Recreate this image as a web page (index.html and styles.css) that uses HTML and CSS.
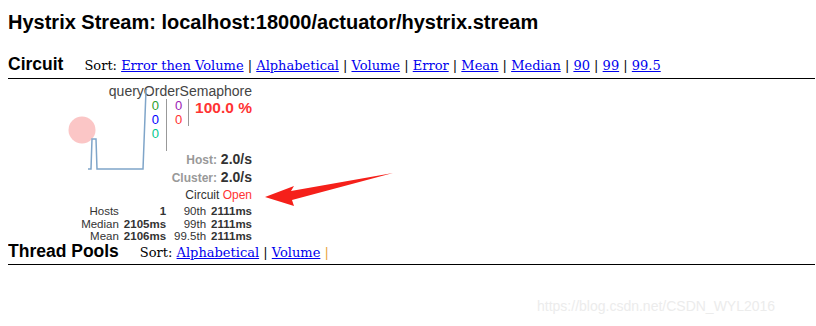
FILE: index.html
```html
<!DOCTYPE html>
<html>

<head>
    <title>Hystrix Dashboard</title>
    <meta name="viewport" content="width=device-width, initial-scale=1.0">
    <link rel="stylesheet" href="styles.css">
</head>

<body>
    <h1 class="title">Hystrix Stream: localhost:18000/actuator/hystrix.stream</h1>

    <div class="section-header">
        <h2>Circuit</h2>
        <div class="sort">Sort:
            <a href="#">Error then Volume</a> |
            <a href="#">Alphabetical</a> |
            <a href="#">Volume</a> |
            <a href="#">Error</a> |
            <a href="#">Mean</a> |
            <a href="#">Median</a> |
            <a href="#">90</a> |
            <a href="#">99</a> |
            <a href="#">99.5</a>
        </div>
    </div>

    <div class="monitors">
        <div class="monitor">
            <svg class="chart" width="100" height="100" viewBox="0 0 100 100">
                <circle cx="16" cy="42" r="13.5" fill="#f9b3b3" fill-opacity="0.75" />
                <polyline points="22,81 25,81 26,51 30,51 31,81 77,81 80,2 81,1"
                    fill="none" stroke="#7fa5c9" stroke-width="1.5" />
            </svg>
            <div class="name">queryOrderSemaphore</div>
            <div class="counters">
                <div class="col">
                    <span class="success">0</span>
                    <span class="short">0</span>
                    <span class="bad">0</span>
                </div>
                <div class="col sep">
                    <span class="timeout">0</span>
                    <span class="failure">0</span>
                </div>
                <div class="rate">100.0 %</div>
            </div>
            <div class="rates">
                <div><span class="label">Host:</span> <b>2.0/s</b></div>
                <div><span class="label">Cluster:</span> <b>2.0/s</b></div>
            </div>
            <div class="status">Circuit <span class="open">Open</span></div>
            <table class="stats">
                <tr><td>Hosts</td><td class="v">1</td><td class="k">90th</td><td class="v">2111ms</td></tr>
                <tr><td>Median</td><td class="v">2105ms</td><td class="k">99th</td><td class="v">2111ms</td></tr>
                <tr><td>Mean</td><td class="v">2106ms</td><td class="k">99.5th</td><td class="v">2111ms</td></tr>
            </table>
        </div>
        <svg class="arrow" width="136" height="40" viewBox="0 0 136 40">
            <path d="M132,4 L30,22 L33,17 L4,28 L33,37 L31,31 Z" fill="#f5201a" />
        </svg>
    </div>

    <div class="section-header pools">
        <h2>Thread Pools</h2>
        <div class="sort">Sort:
            <a href="#">Alphabetical</a> |
            <a href="#">Volume</a> <span class="bar">|</span>
        </div>
    </div>

    <div class="watermark">https://blog.csdn.net/CSDN_WYL2016</div>
</body>

</html>
```

FILE: styles.css
```css
* {
    box-sizing: border-box;
}

body {
    margin: 0 1px 0 8px;
    font-family: "Liberation Sans", Arial, sans-serif;
    color: #000;
}

.title {
    font-size: 20px;
    font-weight: bold;
    margin: 10px 0 0;
    line-height: 24px;
}

.section-header {
    display: flex;
    align-items: baseline;
    border-bottom: 1px solid #000;
    margin-top: 20px;
    height: 25px;
}

.section-header h2 {
    font-size: 17.5px;
    margin: 0;
    line-height: 20px;
}

.sort {
    font-family: "DejaVu Serif", "Times New Roman", serif;
    font-size: 13px;
    margin-left: 21px;
}

.sort a {
    color: #00e;
}

.sort .bar {
    color: #e8a33a;
}

.pools {
    margin-top: 0;
    height: 24px;
}

.monitors {
    position: relative;
    height: 162px;
}

.monitor {
    position: relative;
    width: 190px;
    margin-left: 54px;
    padding-top: 5px;
    display: flex;
    flex-direction: column;
    align-items: flex-end;
    color: #333;
}

.chart {
    position: absolute;
    left: 4px;
    top: 9px;
}

.name {
    font-size: 14px;
    line-height: 15px;
    color: #444;
}

.counters {
    display: flex;
    align-items: flex-start;
    font-size: 13px;
    line-height: 14px;
    height: 52px;
}

.col {
    display: flex;
    flex-direction: column;
    align-items: flex-end;
    padding-right: 7px;
    border-right: 1px solid #999;
    height: 52px;
}

.col.sep {
    height: 27px;
    padding-left: 8px;
    padding-right: 6px;
}

.success { color: #2ca02c; }
.short { color: #0000ff; }
.bad { color: #00c88c; }
.timeout { color: #9b22b5; }
.failure { color: #ff3333; }

.rate {
    font-size: 15.5px;
    font-weight: bold;
    color: #ff3333;
    padding-left: 6px;
    line-height: 18px;
}

.rates {
    text-align: right;
    font-size: 14px;
    line-height: 17px;
}

.rates .label {
    color: #999;
    font-size: 12px;
    font-weight: bold;
}

.status {
    font-size: 12px;
    line-height: 16px;
}

.open {
    color: #ff3333;
}

.stats {
    border-collapse: collapse;
    font-size: 11.5px;
    line-height: 12.5px;
    margin-top: 2px;
}

.stats td {
    padding: 0;
    text-align: right;
}

.stats td.v {
    font-weight: bold;
    padding-left: 5px;
}

.stats td.k {
    padding-left: 8px;
}

.arrow {
    position: absolute;
    left: 253px;
    top: 90px;
}

.watermark {
    position: absolute;
    left: 537px;
    top: 298px;
    font-size: 14px;
    color: #ececec;
}
```
